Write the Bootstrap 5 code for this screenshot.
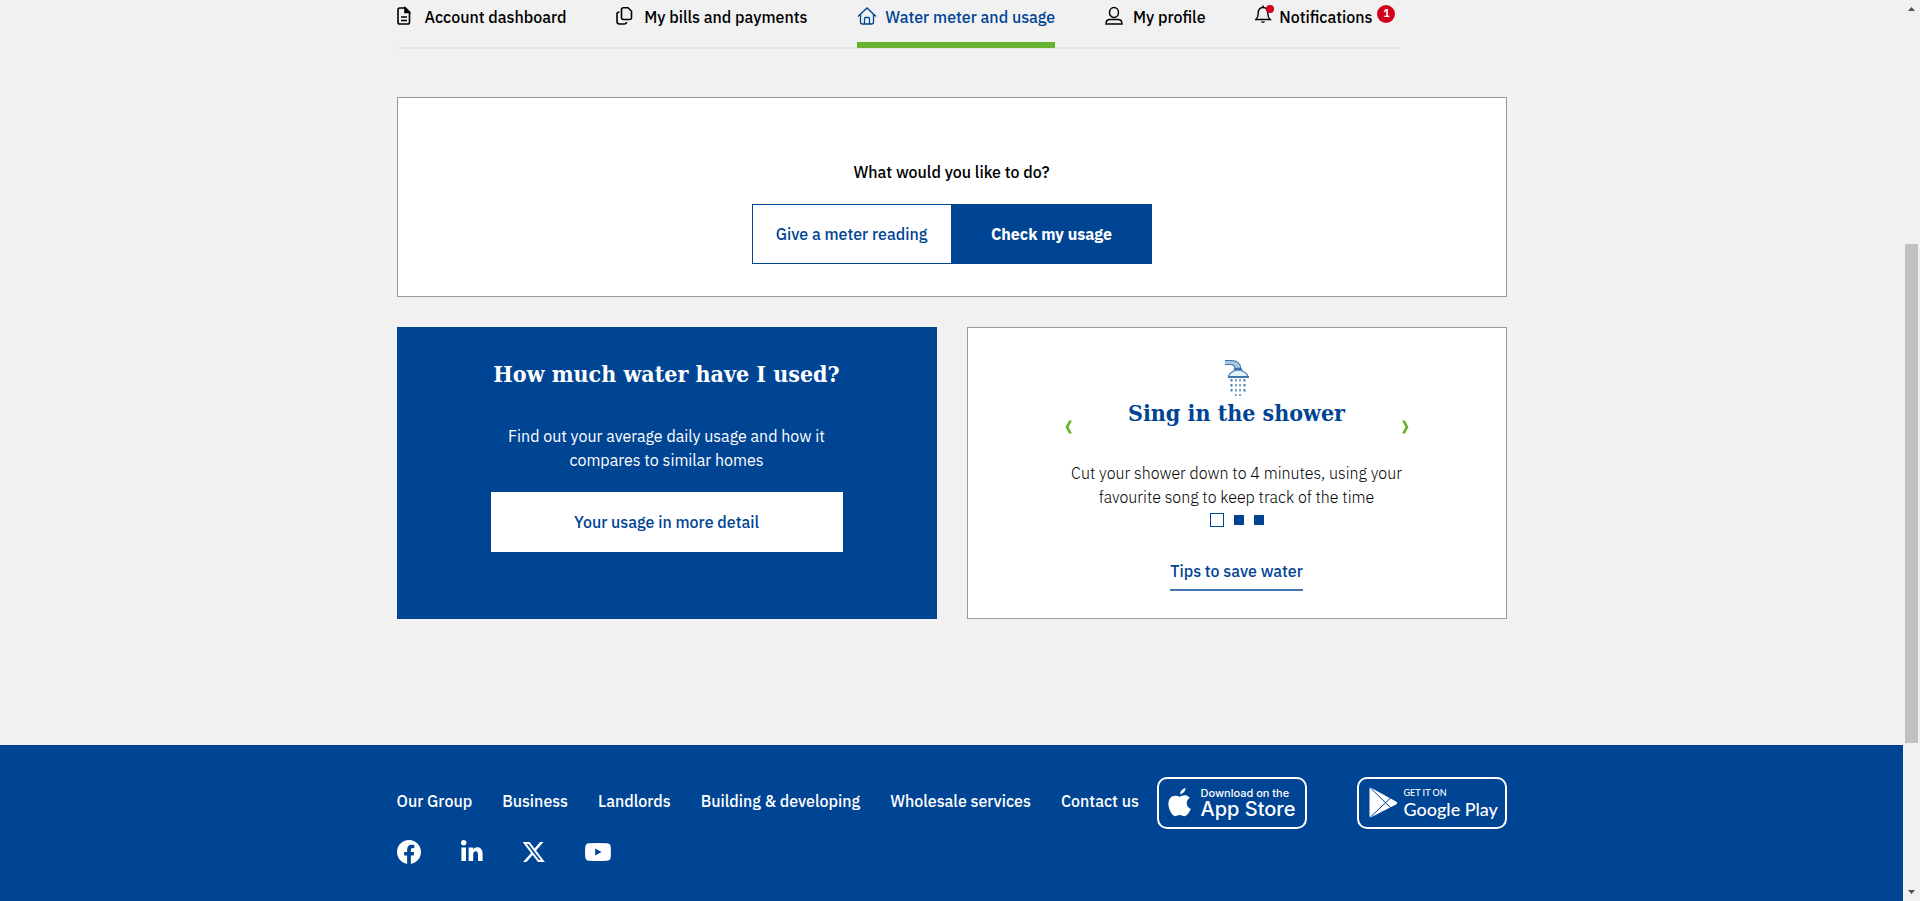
<!DOCTYPE html>
<html lang="en">
<head>
<meta charset="utf-8">
<meta name="viewport" content="width=device-width, initial-scale=1">
<title>Water meter and usage</title>
<link rel="stylesheet" href="https://cdn.jsdelivr.net/npm/bootstrap@5.3.0/dist/css/bootstrap.min.css">
<style>
  :root { --brand: #004494; --leaf: #65b32e; --alert: #d0021b; --page: #f1f1f1; }
  body { background: var(--page); color: #000; font: 400 16px/24px "IBM Plex Sans", Roboto, sans-serif; }
  a { text-decoration: none; }
  .wrap { width: 100%; max-width: 1110px; margin-inline: auto; }

  .account-nav { max-width: 1004px; box-shadow: inset 0 -2px #e6e6e6; font-weight: 500; padding: 0 5px 1px 0; }
  .account-nav .nav-link { display: flex; padding: 5px 0 13px; color: #000; line-height: 24px; border-bottom: 6px solid transparent; white-space: nowrap; }
  .account-nav .nav-link svg { width: 28px; height: 24px; flex: none; }
  .account-nav .nav-link.bell svg { width: 24px; }
  .account-nav .nav-link.active { color: var(--brand); border-color: var(--leaf); }
  .account-nav .badge { width: 18px; height: 18px; margin-left: 5px; background: var(--alert); font-size: 10px; line-height: 18px; padding: 0; }

  .panel { background: #fff; border: 1px solid #999; }
  .question { padding: 62px 32px 32px; }
  .choice-title { font-size: 16px; line-height: 24px; margin: 0 0 20px; font-weight: 500; }
  .choice { height: 60px; width: 200px; border: 1px solid var(--brand); border-radius: 0; background: #fff; color: var(--brand); font-weight: 500; }
  .choice.active { background: var(--brand); border-color: var(--brand); color: #fff; font-weight: 700; }

  .cards { --bs-gutter-x: 30px; margin-top: 30px; }
  .panel-title { font: 700 23px/34px "Roboto Slab", "DejaVu Serif Condensed", "DejaVu Serif", serif; margin: 0; }
  .usage { background: var(--brand); color: #fff; padding: 30px 94px 67px; }
  .usage-text { margin: 33px 0 20px; }
  .usage .btn { height: 60px; border-radius: 0; background: #fff; color: var(--brand); font-weight: 500; line-height: 46px; }
  .tips { padding: 31px 92px 21px; }
  .tips .panel-title { color: var(--brand); line-height: 32px; }
  .tips-text { margin: 32px 0 4px; font-weight: 300; }
  .arrow { position: absolute; top: 56px; padding: 5px; border: 0; background: none; line-height: 0; }
  .arrow-prev { left: 0; }
  .arrow-next { right: 0; }
  .pips { gap: 10px; margin-bottom: 32px; }
  .pip { width: 10px; height: 10px; padding: 0; border: 0; background: var(--brand); }
  .pip.active { width: 14px; height: 14px; background: #fff; border: 1px solid var(--brand); }
  .tips-link { color: var(--brand); font-weight: 500; border-bottom: 2px solid #4778b4; padding-bottom: 6px; }

  .site-footer { background: var(--brand); padding: 32px 0 34px; }
  .site-footer a { color: #fff; font-weight: 500; white-space: nowrap; }
  .foot-links { gap: 30px; padding-bottom: 4px; }
  .stores { gap: 50px; }
  .store { width: 150px; height: 52px; border: 2px solid #fff; border-radius: 10px; font-family: Inter, sans-serif; }
  .store svg { flex: none; }
  .store-small { display: block; font-size: 11px; line-height: 12px; }
  .store-big { display: block; font-size: 20px; line-height: 20px; }
  .store.play { font-family: Lato, sans-serif; }
  .store.play .store-small { font-size: 9px; }
  .store.play .store-big { font-size: 18px; }
  .socials { gap: 40px; margin-top: 8px; height: 30px; }
  .socials a { display: flex; }

  .rail { width: 17px; flex: none; background: #f1f1f1; }
  .rail-before { flex: 227; }
  .rail-thumb { flex: 499; width: 13px; background: #c1c1c1; }
  .rail-after { flex: 141; }
</style>
</head>
<body class="d-flex min-vh-100">
<div class="d-flex flex-column flex-grow-1">
  <div class="wrap">
    <nav class="nav account-nav justify-content-between flex-nowrap" aria-label="Account">
      <a class="nav-link" href="#"><svg viewBox="0 0 28 24" fill="none" stroke="currentColor" stroke-width="1.6"><path d="M1 4.800Q1 3 2.800 3H8.500L12.500 7V17.200Q12.500 19 10.700 19H2.800Q1 19 1 17.200Z"/><path d="M8 3V7.500H12.500Z" fill="currentColor"/><path d="M4 12h6M4 15.500h6"/></svg>Account dashboard</a>
      <a class="nav-link" href="#"><svg viewBox="0 0 28 24" fill="none" stroke="currentColor" stroke-width="1.6"><path d="M7.500 2.800h4.500l3.500 3.500v6.200q0 2-2 2h-6q-2 0-2-2v-7.700q0-2 2-2z"/><path d="M3.500 7q-2.500 0-2.500 2v7.500q0 2.500 2.500 2.500h4.500q2.500 0 2.500-2"/></svg>My bills and payments</a>
      <a class="nav-link active" aria-current="page" href="#"><svg viewBox="0 0 28 24" fill="none" stroke="currentColor" stroke-width="1.3"><path d="M1 11.500L10 3l9 8.500M3.500 9.500V17q0 2 2 2h9q2 0 2-2V9.500M7.500 19v-5.500q0-1 1-1h3q1 0 1 1V19"/></svg>Water meter and usage</a>
      <a class="nav-link" href="#"><svg viewBox="0 0 28 24" fill="none" stroke="currentColor" stroke-width="1.5"><ellipse cx="9" cy="7.500" rx="4.500" ry="5"/><path d="M1 19q0-4.500 4-4.500h8q4 0 4 4.500z"/></svg>My profile</a>
      <a class="nav-link bell" href="#"><svg viewBox="0 0 24 24" fill="none" stroke="currentColor" stroke-width="1.4"><path d="M.8 14.500H15.200Q12.800 12.500 12.800 8.500Q12.800 2.500 8 2.500T3.200 8.500Q3.200 12.500.8 14.500Z"/><path d="M5.500 16.500h5q-2.500 2.800-5 0z" fill="currentColor" stroke="none"/><path d="M8 2.500V.5"/><circle cx="15" cy="4" r="4" fill="#d0021b" stroke="none"/></svg>Notifications<span class="badge rounded-circle">1</span></a>
    </nav>
  </div>

  <main class="wrap flex-grow-1 py-5">
    <section class="panel question text-center">
      <h1 class="choice-title">What would you like to do?</h1>
      <div class="d-flex justify-content-center" role="group" aria-label="What would you like to do?">
        <button type="button" class="btn choice">Give a meter reading</button>
        <button type="button" class="btn choice active" aria-pressed="true">Check my usage</button>
      </div>
    </section>

    <div class="row cards">
      <div class="col-6">
        <section class="usage h-100 text-center">
          <h2 class="panel-title">How much water have I used?</h2>
          <p class="usage-text">Find out your average daily usage and how it compares to similar homes</p>
          <a class="btn w-100" href="#">Your usage in more detail</a>
        </section>
      </div>
      <div class="col-6">
        <section class="panel tips h-100 text-center">
          <div class="position-relative">
            <svg class="d-block mx-auto" width="28" height="38" viewBox="0 0 28 38" fill="none" aria-hidden="true">
              <path d="M2 3.500H8Q14 3.500 15 10" stroke="#a9c8e4" stroke-width="4"/>
              <path d="M2 1.500H8Q17 1.500 17.500 9M2 5.500H7Q12 5.500 12 10" stroke="#3f74ad" stroke-width="1.200"/>
              <path d="M12 9.500h6l1 2.500q5.500 2 6 6H5.500q.5-4 5.500-6z" fill="#e6f0f8" stroke="#3f74ad" stroke-width="1.300"/>
              <path d="M12 10.500h6.500" stroke="#3f74ad" stroke-width="2.500"/><path d="M5 18h21" stroke="#3f74ad" stroke-width="2"/>
              <path d="M8.500 20v13M21.500 20v13" stroke="#4d7eb5" stroke-width="2" stroke-dasharray="2.500 2.500"/>
              <path d="M13 20v17M17 20v17" stroke="#7aa3cf" stroke-width="2" stroke-dasharray="2.500 2.500"/>
            </svg>
            <h2 class="panel-title">Sing in the shower</h2>
            <p class="tips-text">Cut your shower down to 4 minutes, using your favourite song to keep track of the time</p>
            <button class="arrow arrow-prev" type="button" aria-label="Previous tip"><svg width="8" height="14" viewBox="0 0 8 14"><path d="M4 .5H7L3.500 7l3.500 6.500H4L.5 7z" fill="#65b32e"/></svg></button>
            <button class="arrow arrow-next" type="button" aria-label="Next tip"><svg width="8" height="14" viewBox="0 0 8 14"><path d="M4 .5H1L4.500 7l-3.500 6.500H4L7.500 7z" fill="#65b32e"/></svg></button>
          </div>
          <div class="pips d-flex justify-content-center align-items-center">
            <button class="pip active" type="button" aria-label="Tip 1"></button>
            <button class="pip" type="button" aria-label="Tip 2"></button>
            <button class="pip" type="button" aria-label="Tip 3"></button>
          </div>
          <a class="tips-link d-inline-block" href="#">Tips to save water</a>
        </section>
      </div>
    </div>
  </main>

  <footer class="site-footer">
    <div class="wrap">
      <div class="d-flex justify-content-between align-items-center">
        <nav class="d-flex foot-links" aria-label="Footer">
          <a href="#">Our Group</a><a href="#">Business</a><a href="#">Landlords</a><a href="#">Building &amp; developing</a><a href="#">Wholesale services</a><a href="#">Contact us</a>
        </nav>
        <div class="d-flex stores">
          <a class="store d-flex align-items-center" href="#"><svg width="42" height="48" viewBox="0 0 43 48" fill="#fff" aria-hidden="true"><path d="M21.500 15q.2-4 5.500-6.500.5 5-5.500 6.500z"/><path d="M21.500 17.500c2-1 6-3 10 1-4.500 3-4 9.500 1 11.500-1.500 4-4 7.500-6.500 7.500-2 0-2.800-1.200-4.800-1.200S18 37.500 16.500 37.500c-4-.5-9-11-6-17 2.500-5 7-4 11-3z"/></svg><span><span class="store-small">Download on the</span><span class="store-big">App Store</span></span></a>
          <a class="store play d-flex align-items-center" href="#"><svg width="45" height="48" viewBox="0 0 45 48" aria-hidden="true"><path d="M10.500 10q0-2 2-1L37 22.500q2.500 1.500 0 3L12.500 38q-2 1-2-1z" fill="#fff"/><path d="M11.500 9L32 29M11.500 38L32 18.500" stroke="#004494" stroke-width="1"/></svg><span><span class="store-small">GET IT ON</span><span class="store-big">Google Play</span></span></a>
        </div>
      </div>
      <div class="d-flex align-items-center socials">
        <a href="#" aria-label="Facebook"><svg width="24" height="24" viewBox="0 0 24 24"><path fill="#fff" d="M24 12.070C24 5.440 18.630.070 12 .070S0 5.440 0 12.070c0 5.990 4.390 10.950 10.120 11.850v-8.380H7.080v-3.470h3.040V9.430c0-3.010 1.790-4.670 4.530-4.670 1.310 0 2.680.240 2.680.240v2.950h-1.510c-1.490 0-1.950.930-1.950 1.880v2.240h3.320l-.530 3.470h-2.790v8.380C19.610 23.020 24 18.060 24 12.070z"/></svg></a>
        <a href="#" aria-label="LinkedIn"><svg width="22" height="24" viewBox="0 0 22 24" fill="#fff"><circle cx="2.700" cy="2.700" r="2.700"/><path d="M.4 7.500H5V21H.4zM7.600 7.500H12v1.900c2-3.500 9.600-3.300 9.600 4.100V21H17v-6.500c0-4.500-4.800-4-4.800 0V21H7.600z"/></svg></a>
        <a href="#" aria-label="X"><svg width="22" height="20" viewBox="1.600 2.200 21.400 19.600" preserveAspectRatio="none"><path fill="#fff" d="M18.244 2.250h3.308l-7.227 8.260 8.502 11.240H16.170l-5.214-6.817L4.990 21.750H1.680l7.730-8.835L1.254 2.250H8.080l4.713 6.231zm-1.161 17.520h1.833L7.084 4.126H5.117z"/></svg></a>
        <a href="#" aria-label="YouTube"><svg width="26" height="18" viewBox="0 0 26 18"><path fill="#fff" d="M4 .3Q13-.3 22 .3q3.300.2 3.700 3.500.5 5.200 0 10.400-.4 3.300-3.700 3.500-9 .6-18 0-3.300-.2-3.700-3.500-.5-5.200 0-10.400Q.700.500 4 .3z"/><path d="M10.200 5.500v7l6.300-3.500z" fill="#004494"/></svg></a>
      </div>
    </div>
  </footer>
</div>
<div class="rail d-flex flex-column align-items-center vh-100 sticky-top" aria-hidden="true">
  <svg width="7" height="17" viewBox="0 0 7 17"><path d="M0 11h7L3.500 7z" fill="#505050"/></svg>
  <div class="rail-before"></div><div class="rail-thumb"></div><div class="rail-after"></div>
  <svg width="7" height="17" viewBox="0 0 7 17"><path d="M0 6h7l-3.500 4z" fill="#505050"/></svg>
</div>
<script src="https://cdn.jsdelivr.net/npm/bootstrap@5.3.0/dist/js/bootstrap.bundle.min.js"></script>
</body>
</html>
